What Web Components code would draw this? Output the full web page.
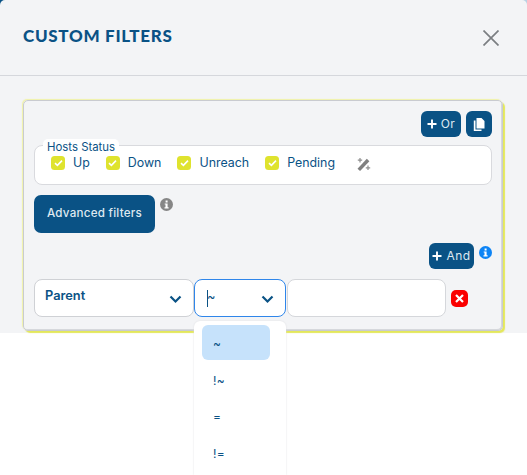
<!DOCTYPE html>
<html><head><meta charset="utf-8"><style>
html,body{margin:0;padding:0;background:#fff;overflow:hidden}
body{height:475px;font-family:"Inter","Liberation Sans",sans-serif;color:#0a5285}
</style></head><body>
<filter-modal></filter-modal>
<template id="modal-t"><style>
:host{display:block;width:527px;height:333px;background:#f3f4f6;border-radius:5px 5px 0 0;box-sizing:border-box}
header{height:75px;border-bottom:1px solid #d5d7dc;display:flex;justify-content:space-between;align-items:center;padding:0 28px 0 23px;box-sizing:content-box}
h1{margin:0 0 3px;font:900 17px/20px Lato,sans-serif;letter-spacing:.7px;color:#0a5285}
svg{display:block;margin-top:1px}
main{padding:24px 23px 0 23px}
</style><header><h1>CUSTOM FILTERS</h1>
<svg width="16" height="16" viewBox="0 0 16 16"><path d="M.5.5 15.500 15.500M15.500.5 .5 15.500" stroke="#7b7e82" stroke-width="1.7" fill="none"/></svg></header>
<main><slot></slot></main></template>

<template id="card-t"><style>
:host{display:flex;flex-direction:column;width:480px;height:231px;box-sizing:border-box;border:1px solid #c9cbd0;border-radius:5px;box-shadow:2px 2px 1px 0 #e4e85a,-1px -1px 1px 0 #f0f2a8,inset -1px -1px 0 #d6d8dc;padding:10px 10px 0 10px;position:relative}
</style><slot></slot></template>

<template id="btn-t"><style>
:host{display:inline-flex;align-items:center;justify-content:center;gap:4px;background:#0a5285;color:#dfe9f1;border-radius:6px;height:26px;box-sizing:border-box;font:400 12px/1 Inter,sans-serif;letter-spacing:.5px}
svg{display:block}
</style><slot></slot></template>

<template id="status-t"><style>
:host{display:block;position:relative;height:40px;box-sizing:border-box;background:#fff;border:1px solid #d9dade;border-radius:8px;margin-top:8px}
.legend{position:absolute;left:8px;top:-7px;background:#fff;border-radius:5px 5px 0 0;padding:1px 4px 0;font:400 11.4px/14px Inter,sans-serif;color:#0a5285}
.items{display:flex;align-items:center;padding:3px 0 0 16px;height:28px}
</style><span class="legend">Hosts Status</span><div class="items"><slot></slot></div></template>

<template id="check-t"><style>
:host{display:inline-flex;align-items:center;gap:8px;font:400 12.4px/16px Inter,sans-serif;color:#0a5285}
.b{width:14px;height:14px;background:#dfe32e;border-radius:3.5px;display:flex;align-items:center;justify-content:center}
</style><span class="b"><svg width="9" height="8" viewBox="0 0 9 8"><path d="M1 4.200 3.400 6.400 8 1.600" fill="none" stroke="#fff" stroke-width="1.6"/></svg></span><slot></slot></template>

<template id="select-t"><style>
:host{display:flex;box-sizing:border-box;height:38px;background:#fff;border:1px solid #cfd1d5;border-radius:8px;align-items:flex-start;justify-content:space-between;font:600 12.8px/16px Inter,sans-serif;color:#0a5285;position:relative}
:host([focus]){border-color:#2f86ea;font-weight:400}
.t{padding:8px 0 0 10px}
:host([focus]) .t{padding:9px 0 0 12px}
svg{position:absolute;right:11px;top:15px}
</style><span class="t"><slot></slot></span><svg width="13" height="9" viewBox="0 0 13 9"><path d="M1.500 1.500 6.500 6.500 11.500 1.500" fill="none" stroke="#0a5285" stroke-width="2.2"/></svg></template>

<template id="menu-t"><style>
:host{display:flex;flex-direction:column;position:absolute;left:194px;top:321px;width:92px;height:154px;box-sizing:border-box;background:#fff;border-radius:6px 6px 0 0;box-shadow:0 0 2px #dcdde0;padding:4px 8px;z-index:5}
</style><slot></slot></template>

<template id="opt-t"><style>
:host{display:block;width:68px;height:36px;box-sizing:border-box;margin-bottom:1.2px;border-radius:6px;padding:11px 11px 0;font:400 12px/16px Inter,sans-serif;color:#0a5285;letter-spacing:.3px}
:host([sel]){background:#c6e2fb}
</style><slot></slot></template>

<template id="info-t"><style>
:host{display:inline-flex;width:13px;height:13px;border-radius:50%;background:var(--c,#868686);align-items:center;justify-content:center;margin-top:3px}
svg{display:block}
</style><svg width="5" height="9" viewBox="0 0 5 9"><path d="M1.600 0.400h2v2h-2zM.7 3.400h2.900v3.900h1v1.200H.5V7.300h1V4.600H.7z" fill="#fff"/></svg></template>

<script>
function reg(tag,id){customElements.define(tag,class extends HTMLElement{constructor(){super();this.attachShadow({mode:'open'}).appendChild(document.getElementById(id).content.cloneNode(true))}})}
[['x-modal','modal-t'],['x-card','card-t'],['x-btn','btn-t'],['x-status','status-t'],['x-check','check-t'],['x-select','select-t'],['x-menu','menu-t'],['x-opt','opt-t'],['x-info','info-t']].forEach(a=>reg(a[0],a[1]));
customElements.define('filter-modal',class extends HTMLElement{constructor(){super();const s=this.attachShadow({mode:'open'});
const plus='<svg width="10" height="10" viewBox="0 0 10 10"><path d="M5 .5v9M.5 5h9" stroke="#fff" stroke-width="1.9"/></svg>';
s.innerHTML=`<style>
:host{display:block;background:linear-gradient(90deg,#0a5285 0 50%,#b9d2e4 50% 100%) top/100% 6px no-repeat}
.top{display:flex;justify-content:flex-end;gap:5px;height:26px}
.adv{margin-top:10px;display:flex;align-items:flex-start;gap:5px;height:38px}
.and{margin-top:10px;display:flex;justify-content:flex-end;gap:5px;height:26px}
.row{margin-top:10px;display:flex;align-items:flex-start;height:38px}
.x{width:17px;height:17px;border-radius:5px;background:#fa0000;margin:11px 0 0 5px;display:flex;align-items:center;justify-content:center}
.input{width:159px;height:38px;box-sizing:border-box;background:#fff;border:1px solid #d5d7db;border-radius:8px;margin-left:1px}
.wand{margin-left:21px;margin-top:2px;display:block}
x-check+x-check{margin-left:16px}
.big{width:121px;height:38px;font-size:11.6px;font-weight:500;letter-spacing:.25px;border-radius:7px}
.caret{position:absolute;left:12px;top:10px;width:1px;height:17px;background:#0a5285}
x-select{flex:none}
.or{width:40px}.copy{width:26px}.andb{width:45px}
</style>
<x-modal><x-card>
<div class="top"><x-btn class="or">${plus}<span>Or</span></x-btn>
<x-btn class="copy"><svg width="12" height="13" viewBox="0 0 12 13"><path d="M3.500 0h5l3 3v7.500h-8zM.8 2.500h1.700v9h6V13H.8z" fill="#fff"/></svg></x-btn></div>
<x-status>
<x-check>Up</x-check><x-check>Down</x-check><x-check>Unreach</x-check><x-check>Pending</x-check>
<svg class="wand" width="15" height="14" viewBox="0 0 15 14"><path d="M1.500 11.800 10.800 1.800 13.400 4.200 4.100 14z" fill="#7f7f7f"/><path d="M4 1v4.400M1.800 3.200h4.400M12 8.600V13M9.800 10.800h4.400" stroke="#8e8e8e" stroke-width="1.200" fill="none"/></svg>
</x-status>
<div class="adv"><x-btn class="big">Advanced filters</x-btn><x-info></x-info></div>
<div class="and"><x-btn class="andb">${plus}<span>And</span></x-btn><x-info style="--c:#0d84f5"></x-info></div>
<div class="row"><x-select style="width:160px">Parent</x-select>
<x-select focus style="width:92px"><span class="caret"></span>~</x-select>
<div class="input"></div>
<div class="x"><svg width="9" height="9" viewBox="0 0 9 9"><path d="M1 1 8 8M8 1 1 8" stroke="#fff" stroke-width="2.2"/></svg></div></div>
</x-card></x-modal>
<x-menu><x-opt sel>~</x-opt><x-opt>!~</x-opt><x-opt>=</x-opt><x-opt>!=</x-opt></x-menu>`;
}});
</script></body></html>
